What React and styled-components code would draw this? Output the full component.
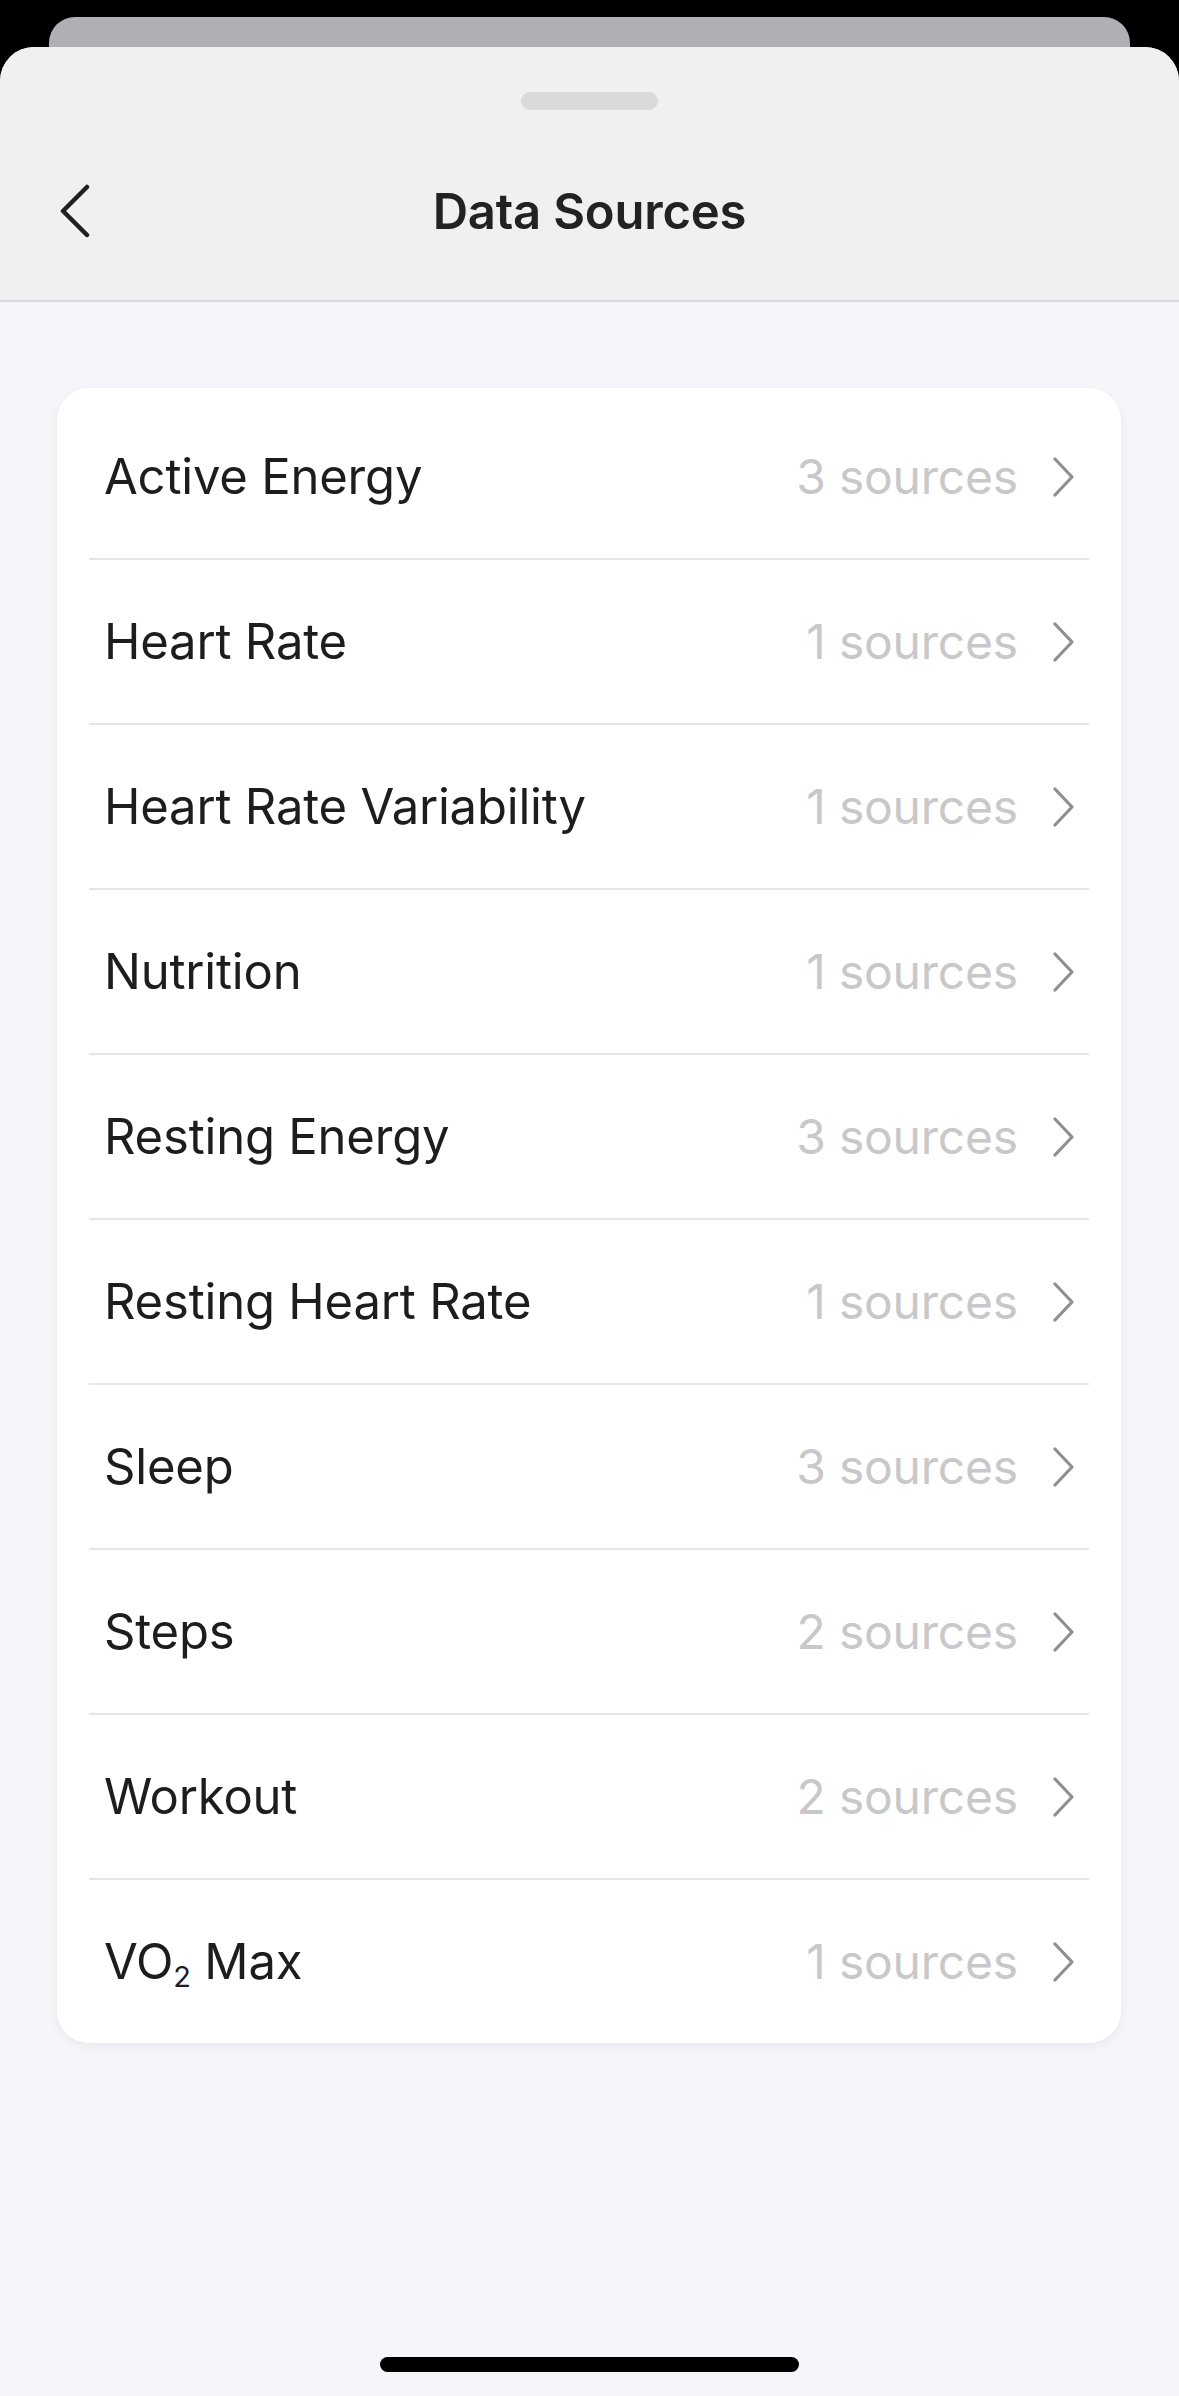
import styled, { createGlobalStyle } from "styled-components";

const GlobalStyle = createGlobalStyle`
  html, body {
    margin: 0;
    padding: 0;
    background: #000;
  }
  body {
    font-family: "Inter", "Noto Sans", sans-serif;
    -webkit-font-smoothing: antialiased;
  }
`;

const Screen = styled.div`
  width: 1179px;
  height: 2396px;
  background: #000;
  padding-top: 17px;
  box-sizing: border-box;
  display: flex;
  flex-direction: column;
  overflow: hidden;
`;

const BehindCard = styled.div`
  height: 30px;
  margin: 0 49px;
  background: #b0b0b4;
  border-radius: 26px 26px 0 0;
`;

const Sheet = styled.div`
  flex: 1;
  display: flex;
  flex-direction: column;
  background: #f6f6fa;
  border-radius: 34px 34px 0 0;
  overflow: hidden;
`;

const Header = styled.div`
  background: #f0f0f2;
  border-bottom: 2px solid #d9d9dd;
  padding-top: 45px;
  display: flex;
  flex-direction: column;
  align-items: center;
`;

const Handle = styled.div`
  width: 137px;
  height: 18px;
  border-radius: 9px;
  background: #dadadc;
`;

const NavBar = styled.div`
  width: 100%;
  box-sizing: border-box;
  margin-top: 12px;
  height: 178px;
  display: grid;
  grid-template-columns: 200px 1fr 200px;
  align-items: center;
  padding: 0 58px;
`;

const BackButton = styled.button`
  border: none;
  background: none;
  padding: 0;
  width: 34px;
  height: 56px;
  display: flex;
  align-items: center;
  cursor: pointer;
`;

const Title = styled.h1`
  margin: 0;
  text-align: center;
  font-size: 49px;
  font-weight: 600;
  color: #222224;
  letter-spacing: -0.2px;
`;

const Content = styled.div`
  flex: 1;
  padding: 86px 58px 0 57px;
  display: flex;
  flex-direction: column;
`;

const Card = styled.div`
  background: #fff;
  border-radius: 32px;
  padding: 7px 0 0;
  box-shadow: 0 3px 10px rgba(0, 0, 0, 0.06);
`;

const Row = styled.div`
  height: 163px;
  margin: 0 32px;
  padding: 0 13px 0 15px;
  display: flex;
  align-items: center;
  border-bottom: ${(p) => (p.$last ? "none" : "2px solid #e6e6e9")};
`;

const Label = styled.div`
  flex: 1;
  font-size: 49px;
  color: #1d1d1f;
  letter-spacing: -0.2px;
  sub {
    font-size: 29px;
    vertical-align: -8px;
    line-height: 0;
  }
`;

const Count = styled.div`
  font-size: 48px;
  color: #c8c8cb;
  letter-spacing: -0.2px;
  margin-right: 34px;
`;

const HomeBar = styled.div`
  margin: auto auto 24px;
  width: 419px;
  height: 15px;
  border-radius: 8px;
  background: #000;
`;

const ChevronLeft = () => (
  <svg width="32" height="54" viewBox="0 0 32 54" fill="none">
    <path
      d="M29 3 L5 27 L29 51"
      stroke="#1f1f21"
      strokeWidth="4.5"
      strokeLinecap="round"
      strokeLinejoin="round"
    />
  </svg>
);

const ChevronRight = () => (
  <svg width="24" height="40" viewBox="0 0 24 40" fill="none">
    <path
      d="M3 2 L20 20 L3 38"
      stroke="#8e8e93"
      strokeWidth="3.2"
      strokeLinecap="round"
      strokeLinejoin="round"
    />
  </svg>
);

const sources = [
  { name: "Active Energy", count: 3 },
  { name: "Heart Rate", count: 1 },
  { name: "Heart Rate Variability", count: 1 },
  { name: "Nutrition", count: 1 },
  { name: "Resting Energy", count: 3 },
  { name: "Resting Heart Rate", count: 1 },
  { name: "Sleep", count: 3 },
  { name: "Steps", count: 2 },
  { name: "Workout", count: 2 },
  { name: "VO2 Max", count: 1, vo2: true },
];

export default function App() {
  return (
    <>
      <GlobalStyle />
      <Screen>
        <BehindCard />
        <Sheet>
          <Header>
            <Handle />
            <NavBar>
              <BackButton aria-label="Back">
                <ChevronLeft />
              </BackButton>
              <Title>Data Sources</Title>
              <div />
            </NavBar>
          </Header>
          <Content>
            <Card>
              {sources.map((s, i) => (
                <Row key={s.name} $last={i === sources.length - 1}>
                  <Label>
                    {s.vo2 ? (
                      <>
                        VO<sub>2</sub> Max
                      </>
                    ) : (
                      s.name
                    )}
                  </Label>
                  <Count>{s.count} sources</Count>
                  <ChevronRight />
                </Row>
              ))}
            </Card>
            <HomeBar />
          </Content>
        </Sheet>
      </Screen>
    </>
  );
}
